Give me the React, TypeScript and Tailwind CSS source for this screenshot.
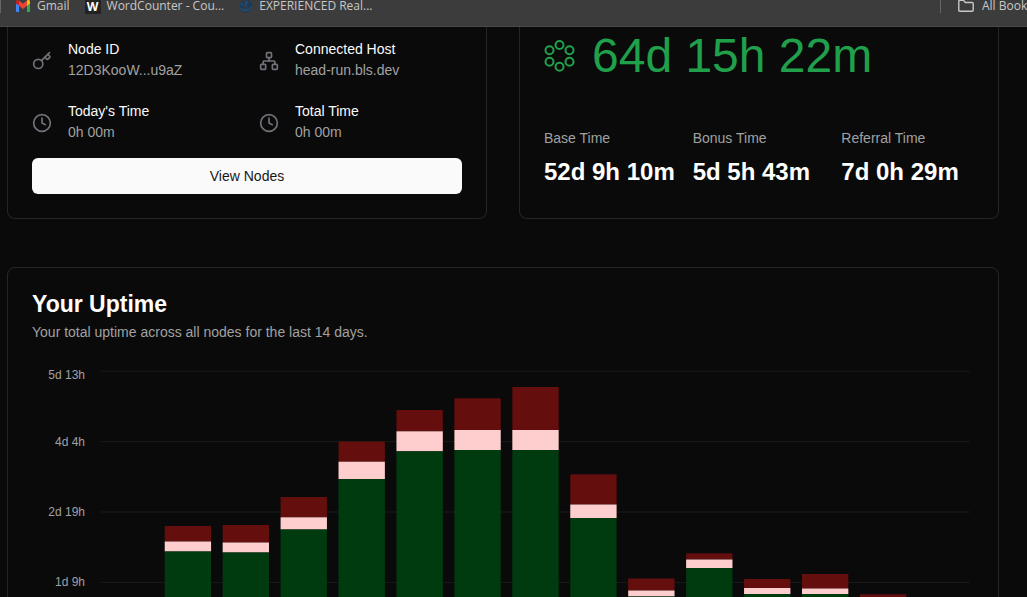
import type { ReactNode } from "react";
import { Clock, Key, Network, type LucideIcon } from "lucide-react";

type Stat = { icon: LucideIcon; label: string; value: string };
type Day = { total: number; upper: number; base: number };

const nodeStats: Stat[] = [
  { icon: Key, label: "Node ID", value: "12D3KooW...u9aZ" },
  { icon: Network, label: "Connected Host", value: "head-run.bls.dev" },
  { icon: Clock, label: "Today's Time", value: "0h 00m" },
  { icon: Clock, label: "Total Time", value: "0h 00m" },
];

const times = [
  { label: "Base Time", value: "52d 9h 10m" },
  { label: "Bonus Time", value: "5d 5h 43m" },
  { label: "Referral Time", value: "7d 0h 29m" },
];

const CHART_HEIGHT = 356;
const BASELINE = 287;
const TICK_STEP = 70.4;
const BANDS = 15;
const ticks = ["5d 13h", "4d 4h", "2d 19h", "1d 9h"];

// Heights of the stacked segments, measured up from the zero line.
const days: Day[] = [
  { total: 127, upper: 111.5, base: 101.5 },
  { total: 128, upper: 110.5, base: 100.5 },
  { total: 156, upper: 135.7, base: 123.5 },
  { total: 211.5, upper: 191.3, base: 174 },
  { total: 243, upper: 221.7, base: 201.7 },
  { total: 254.7, upper: 223, base: 203 },
  { total: 266, upper: 223, base: 203 },
  { total: 178.7, upper: 148.5, base: 135 },
  { total: 74.5, upper: 62.5, base: 56.5 },
  { total: 99.7, upper: 93.5, base: 85 },
  { total: 74, upper: 65, base: 59 },
  { total: 79, upper: 64.5, base: 59 },
  { total: 58.7, upper: 50, base: 44 },
];

function GmailLogo() {
  return (
    <svg viewBox="0 0 16 12" className="h-3 w-4 shrink-0" aria-hidden="true">
      <path d="M1 1v10.200c0 .4.3.8.8.8H4V4z" fill="#4285f4" />
      <path d="M12 4v8h2.200c.5 0 .8-.4.8-.8V1z" fill="#34a853" />
      <path d="M12 .500v5.300l3-2.300V1.500c0-1.500-1.700-2-2.600-1.200z" fill="#fbbc04" />
      <path d="M1 1.500v2l3 2.300V.500L3.600.300C2.700-.500 1 0 1 1.500z" fill="#c5221f" />
      <path d="M4 .500l4 3.300 4-3.300v5.300L8 9 4 5.800z" fill="#ea4335" />
    </svg>
  );
}

function WordCounterLogo() {
  return (
    <span className="flex h-3.5 w-4 shrink-0 items-center justify-center bg-[#222222] font-['Open_Sans',sans-serif] text-xs font-bold text-white">
      W
    </span>
  );
}

function GlobeLogo() {
  return (
    <svg viewBox="0 0 14 13" className="h-[13px] w-3.5 shrink-0" aria-hidden="true">
      <circle cx="7" cy="6" r="6.5" fill="#1d3b54" />
      <path d="M5 0l4 1 .5 3-2 2 2.500 1-1 3-3 1-2-3 2-2-2-2z" fill="#333c46" />
      <path d="M1.500 8c3 3.500 8 3.500 11-1M8 1l-1 5M2 3l2 3" stroke="#1a5280" strokeWidth="1.200" fill="none" />
    </svg>
  );
}

function FolderIcon() {
  return (
    <svg
      viewBox="0 0 16 13"
      className="h-[13px] w-4 shrink-0"
      fill="none"
      stroke="currentColor"
      strokeWidth="1.4"
      strokeLinejoin="round"
      aria-hidden="true"
    >
      <path d="M.8 1.200Q.8.300 1.800.300H5.500L7.300 2.500H14.200Q15.200 2.500 15.200 3.500V10.200Q15.200 11.200 14.200 11.200H1.800Q.8 11.200.8 10.200Z" />
    </svg>
  );
}

function RingCluster() {
  const centres = [
    [15.5, 5],
    [5.5, 10.3],
    [25.5, 10.3],
    [5.5, 21.7],
    [25.5, 21.7],
    [15.5, 26.8],
  ];
  return (
    <svg viewBox="0 0 32 32" className="size-8 shrink-0" fill="none" stroke="currentColor" strokeWidth="2" aria-hidden="true">
      {centres.map(([x, y]) => (
        <circle key={`${x}-${y}`} cx={x} cy={y} r="4" />
      ))}
    </svg>
  );
}

function Bookmark({ icon, children }: { icon: ReactNode; children: ReactNode }) {
  return (
    <a href="#" className="flex shrink-0 items-start gap-1.5">
      {icon}
      {children}
    </a>
  );
}

function BookmarksBar() {
  return (
    <nav
      aria-label="Bookmarks"
      className="flex h-[27px] shrink-0 items-start overflow-hidden whitespace-nowrap border-b border-[#484848] bg-[#3c3c3c] font-['Open_Sans','Noto_Sans',sans-serif] text-xs leading-3 text-[#c8c8c8]"
    >
      <span className="h-[13px] w-px shrink-0 bg-[#666666]" />
      <div className="flex min-w-0 flex-1 gap-[15px] pl-3.5">
        <Bookmark icon={<GmailLogo />}>Gmail</Bookmark>
        <Bookmark icon={<WordCounterLogo />}>WordCounter - Cou...</Bookmark>
        <Bookmark icon={<GlobeLogo />}>EXPERIENCED Real...</Bookmark>
      </div>
      <div className="flex w-[87px] shrink-0 items-start">
        <span className="mr-[17px] h-[13px] w-px shrink-0 bg-[#666666]" />
        <a href="#" className="flex shrink-0 items-start gap-2">
          <FolderIcon />
          All Bookmarks
        </a>
      </div>
    </nav>
  );
}

function NodeCard() {
  return (
    <section className="rounded-b-lg border border-t-0 border-[#262626] px-6 pb-6 pt-3">
      <dl className="grid grid-cols-2 gap-x-6 gap-y-5">
        {nodeStats.map(({ icon: Icon, label, value }) => (
          <div key={label} className="flex items-center gap-4">
            <Icon className="mt-0.5 size-5 shrink-0 text-[#71717a]" strokeWidth={2} />
            <div className="leading-[21px]">
              <dt className="text-[#fafafa]">{label}</dt>
              <dd className="text-[#a1a1a1]">{value}</dd>
            </div>
          </div>
        ))}
      </dl>
      <button type="button" className="mt-[15px] h-9 w-full rounded-md bg-[#fafafa] text-[#171717]">
        View Nodes
      </button>
    </section>
  );
}

function EarningsCard() {
  return (
    <section className="rounded-b-lg border border-t-0 border-[#262626] px-6 pb-6 pt-[5px]">
      <p className="flex items-center gap-4 text-5xl leading-[48px] text-[#20a04b]">
        <RingCluster />
        64d 15h 22m
      </p>
      <dl className="mt-12 grid grid-cols-3 gap-4 whitespace-nowrap">
        {times.map(({ label, value }) => (
          <div key={label}>
            <dt className="leading-5 text-[#a1a1a1]">{label}</dt>
            <dd className="mt-2 text-2xl font-bold text-white">{value}</dd>
          </div>
        ))}
      </dl>
    </section>
  );
}

function UptimeChart() {
  const band = 100 / BANDS;
  const y = (height: number) => BASELINE - height;
  return (
    <div className="flex gap-4 pr-1">
      <ul className="flex w-[53px] shrink-0 flex-col pt-px text-right text-xs leading-4 text-[#a1a1a1]">
        {ticks.map((tick, i) => (
          <li key={tick} className={i === 0 ? "h-[67px]" : "h-[70px]"}>
            {tick}
          </li>
        ))}
      </ul>
      <svg className="block min-w-0 flex-1" height={CHART_HEIGHT} role="img" aria-label="Uptime per day">
        {[0, 1, 2, 3, 4].map((i) => (
          <line key={i} x1="0" x2="100%" y1={5.2 + i * TICK_STEP} y2={5.2 + i * TICK_STEP} stroke="#1a1a1a" />
        ))}
        {days.map((day, i) => {
          const x = `${(i + 1.1) * band}%`;
          const width = `${band * 0.8}%`;
          return (
            <g key={i}>
              <rect x={x} width={width} y={y(day.total)} height={day.total - day.upper} fill="#640e0e" />
              <rect x={x} width={width} y={y(day.upper)} height={day.upper - day.base} fill="#fecdcd" />
              <rect x={x} width={width} y={y(day.base)} height={day.base} fill="#003a0f" />
            </g>
          );
        })}
      </svg>
    </div>
  );
}

export default function App() {
  return (
    <div className="flex h-screen flex-col overflow-hidden bg-[#0a0a0a] font-['Liberation_Sans',Arial,sans-serif] text-sm">
      <BookmarksBar />
      <main className="flex min-h-0 flex-1 flex-col gap-12 overflow-hidden pl-[7px] pr-7">
        <div className="grid shrink-0 grid-cols-2 gap-8">
          <NodeCard />
          <EarningsCard />
        </div>
        <section className="shrink-0 rounded-lg border border-[#262626] p-6">
          <h2 className="text-[23px] font-bold leading-6 text-white">Your Uptime</h2>
          <p className="mb-6 mt-1.5 leading-5 text-[#a1a1a1]">Your total uptime across all nodes for the last 14 days.</p>
          <UptimeChart />
        </section>
      </main>
    </div>
  );
}
